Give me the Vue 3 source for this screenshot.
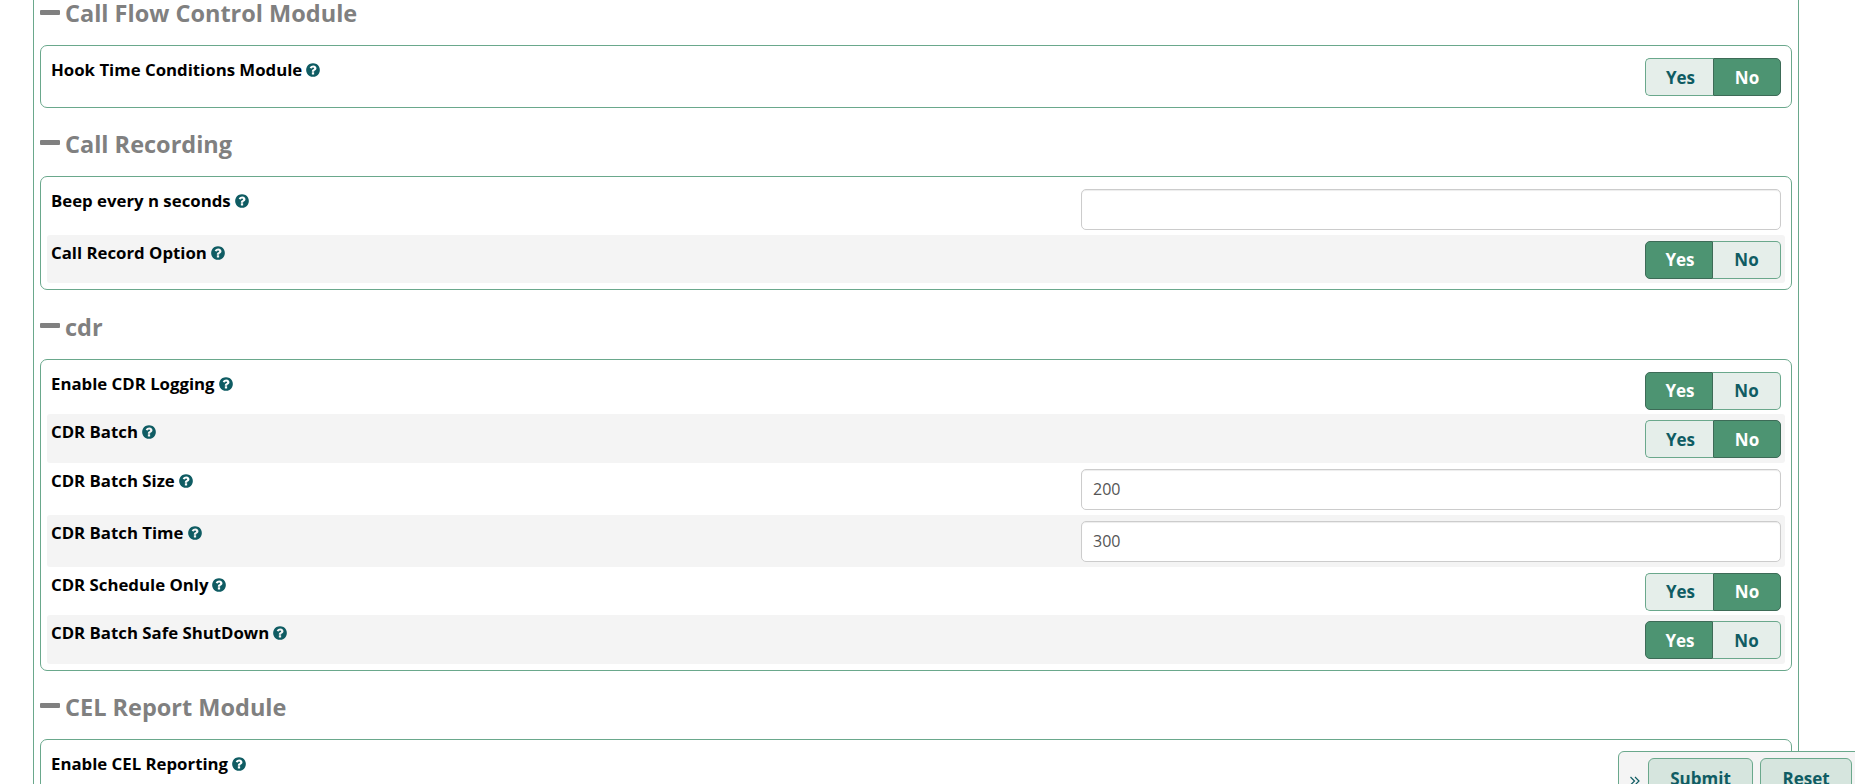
<script setup>
const helpPath = 'M1024 1376v-192q0-14-9-23t-23-9h-192q-14 0-23 9t-9 23v192q0 14 9 23t23 9h192q14 0 23-9t9-23zm256-672q0-88-55.5-163t-138.5-116-170-41q-243 0-371 213-15 24 8 42l132 100q7 6 19 6 16 0 25-12 53-68 86-92 34-24 86-24 48 0 85.5 26t37.5 59q0 38-20 61t-68 45q-63 28-115.5 86.5t-52.5 125.5v36q0 14 9 23t23 9h192q14 0 23-9t9-23q0-19 21.5-49.5t54.5-49.5q32-18 49-28.5t46-35 44.5-48 28-60.5 12.5-81zm384 192q0 209-103 385.5t-279.5 279.5-385.5 103-385.5-103-279.5-279.5-103-385.5 103-385.5 279.5-279.5 385.5-103 385.5 103 279.5 279.5 103 385.5z'

const sections = [
  {
    title: 'Call Flow Control Module',
    rows: [{ label: 'Hook Time Conditions Module', toggle: 'No' }],
  },
  {
    title: 'Call Recording',
    rows: [
      { label: 'Beep every n seconds', input: '' },
      { label: 'Call Record Option', toggle: 'Yes' },
    ],
  },
  {
    title: 'cdr',
    rows: [
      { label: 'Enable CDR Logging', toggle: 'Yes' },
      { label: 'CDR Batch', toggle: 'No' },
      { label: 'CDR Batch Size', input: '200' },
      { label: 'CDR Batch Time', input: '300' },
      { label: 'CDR Schedule Only', toggle: 'No' },
      { label: 'CDR Batch Safe ShutDown', toggle: 'Yes' },
    ],
  },
  {
    title: 'CEL Report Module',
    rows: [{ label: 'Enable CEL Reporting', toggle: 'Yes' }],
  },
]
</script>

<template>
  <div class="page">
    <div class="frame">
      <section v-for="section in sections" :key="section.title" class="section">
        <h3 class="section-title">
          <span class="minus" />
          {{ section.title }}
        </h3>
        <div class="card">
          <div v-for="row in section.rows" :key="row.label" class="row" :class="{ 'row-input': row.input !== undefined }">
            <div class="label">
              {{ row.label }}
              <svg class="help" viewBox="0 0 1792 1792"><path :d="helpPath" fill="currentColor" /></svg>
            </div>
            <input v-if="row.input !== undefined" class="text-input" type="text" :value="row.input" />
            <div v-else class="toggle">
              <span class="opt" :class="{ on: row.toggle === 'Yes' }">Yes</span>
              <span class="opt" :class="{ on: row.toggle === 'No' }">No</span>
            </div>
          </div>
        </div>
      </section>
    </div>

    <div class="action-bar">
      <svg class="chevrons" viewBox="0 0 12 12" fill="none" stroke="currentColor" stroke-width="1.2">
        <path d="M1.5 2 L5.5 6 L1.5 10" />
        <path d="M6 2 L10 6 L6 10" />
      </svg>
      <button class="action submit">Submit</button>
      <button class="action reset">Reset</button>
    </div>
  </div>
</template>

<style scoped>
  .page {
    position: relative;
    height: 784px;
    overflow: hidden;
    background: #fff;
    font-family: 'Open Sans', sans-serif;
  }

  .frame {
    margin: 0 56px 0 33px;
    padding: 0 6px;
    border-left: 1px solid #6aa88c;
    border-right: 1px solid #6aa88c;
    min-height: 784px;
    box-sizing: border-box;
  }

  .section-title {
    display: flex;
    align-items: center;
    gap: 5px;
    box-sizing: border-box;
    margin: 0;
    height: 30px;
    padding-bottom: 4px;
    font-size: 23.5px;
    font-weight: 700;
    color: #808080;
    line-height: 26px;
  }

  .section + .section .section-title {
    margin-top: 23.3px;
  }

  .minus {
    width: 20px;
    height: 5px;
    margin-top: -2px;
    background: #808080;
    border-radius: 1px;
  }

  .card {
    margin-top: 15px;
    padding: 6px;
    border: 1px solid #6aa88c;
    border-radius: 7px;
    background: #fff;
  }

  .row {
    display: flex;
    align-items: flex-start;
    justify-content: space-between;
    padding: 6px 4px 4.5px;
    border-radius: 3px;
  }

  .row-input {
    padding-bottom: 5px;
  }

  .row:nth-child(even) {
    background: #f4f4f4;
  }

  .label {
    display: flex;
    align-items: center;
    gap: 3px;
    font-size: 16.8px;
    font-weight: 700;
    line-height: 24px;
    color: #000;
  }

  .help {
    width: 16px;
    height: 16px;
    color: #0f5c63;
  }

  .text-input {
    width: 700px;
    height: 41px;
    box-sizing: border-box;
    padding: 0 11px;
    border: 1px solid #ccc;
    border-radius: 5px;
    background: #fff;
    box-shadow: inset 0 1px 1px rgba(0, 0, 0, 0.075);
    font-family: inherit;
    font-size: 16px;
    color: #555;
    outline: none;
  }

  .toggle {
    display: flex;
    height: 38px;
  }

  .opt {
    display: flex;
    align-items: center;
    justify-content: center;
    box-sizing: border-box;
    width: 68px;
    border: 1px solid #6aa88c;
    background: #e5eeea;
    color: #0f5c63;
    font-size: 17px;
    font-weight: 700;
  }

  .opt:first-child {
    padding-left: 2px;
    border-right: 0;
    border-radius: 5px 0 0 5px;
  }

  .opt:last-child {
    border-left: 0;
    border-radius: 0 5px 5px 0;
  }

  .opt.on {
    background: #4d9472;
    border: 1px solid #3d6b57;
    color: #fff;
  }

  .action-bar {
    position: absolute;
    left: 1618px;
    top: 751px;
    width: 260px;
    height: 60px;
    display: flex;
    align-items: flex-start;
    gap: 7px;
    box-sizing: border-box;
    padding: 6px 0 0 10px;
    border: 1px solid #6aa88c;
    border-radius: 6px;
    background: #f4f4f4;
  }

  .chevrons {
    width: 12px;
    height: 12px;
    margin: 17px 0 0 0;
    color: #0f5c63;
  }

  .action {
    height: 44px;
    box-sizing: border-box;
    padding: 0 0 3px;
    border: 1px solid #6aa88c;
    border-radius: 6px;
    background: #d6e5de;
    color: #0f5c63;
    font-family: inherit;
    font-size: 17px;
    font-weight: 700;
  }

  .submit {
    width: 105px;
  }

  .reset {
    width: 92px;
  }
</style>
